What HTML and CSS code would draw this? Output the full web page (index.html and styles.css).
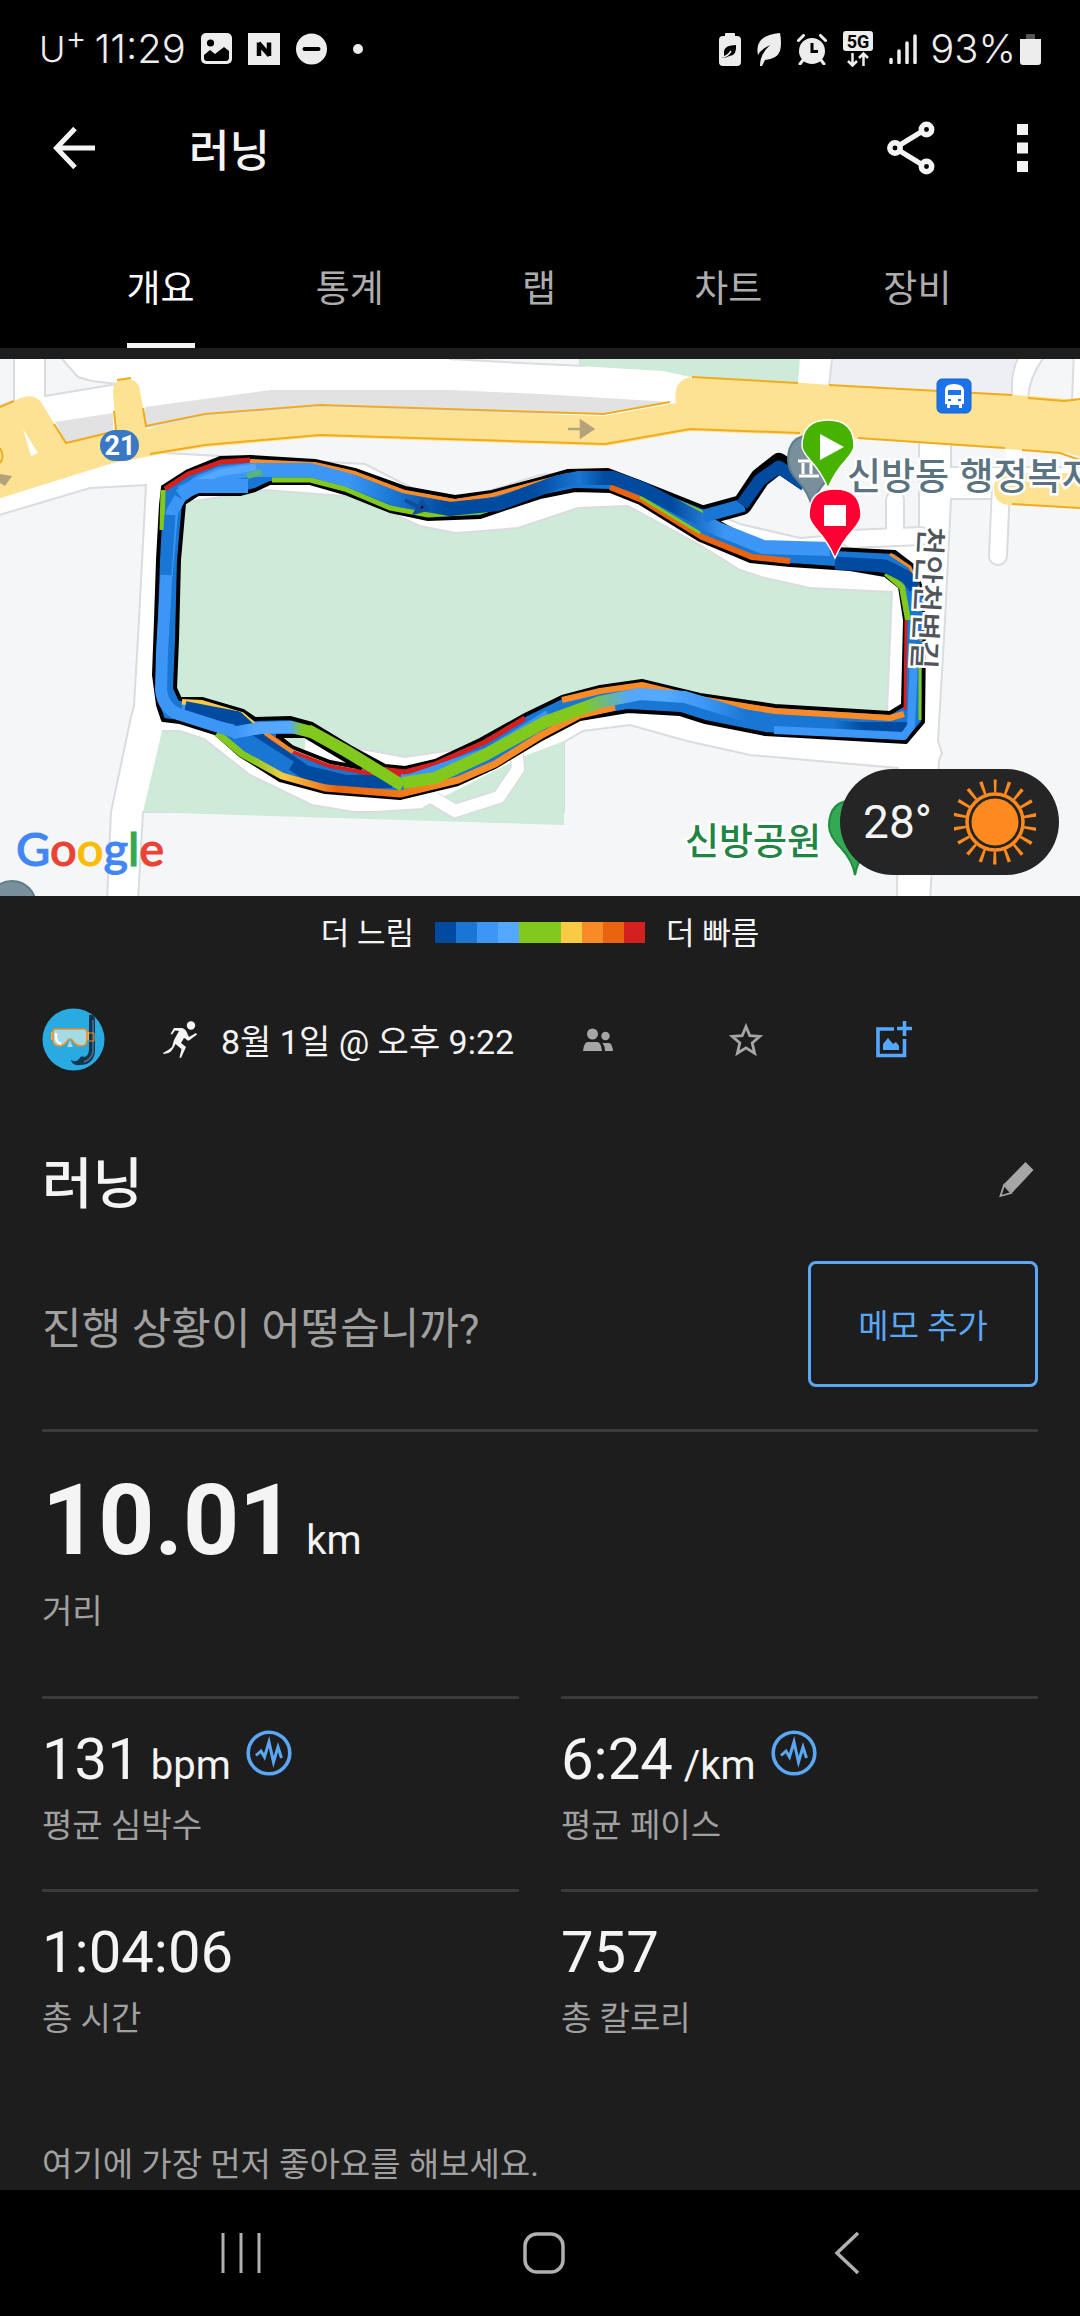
FILE: index.html
```html
<!DOCTYPE html>
<html lang="ko">
<head>
<meta charset="utf-8">
<meta name="viewport" content="width=device-width, initial-scale=1">
<title>러닝</title>
<link rel="stylesheet" href="styles.css">
</head>
<body>
<header class="top">
  <div class="status">
    <div class="status-side">
      <span class="carrier">U<sup>+</sup></span>
      <span class="clock">11:29</span>
      <div class="notices">
        <svg width="31" height="32" viewBox="0 0 31 32"><rect y="0" width="31" height="31" rx="5" fill="#ededed"/><circle cx="9.500" cy="10" r="3.600" fill="#000"/><path d="M3 22l6-5 5 4 9-7 5 4v6q0 4-3 4H6q-3 0-3-3z" fill="#000"/></svg>
        <svg width="32" height="32" viewBox="0 0 32 32"><rect width="32" height="32" fill="#ededed"/><path d="M11 23V9.500M21 23V9.500M10.500 10L21.500 22.500" stroke="#000" stroke-width="4.500" fill="none"/></svg>
        <svg width="31" height="32" viewBox="0 0 31 32"><circle cx="15.500" cy="16" r="15.500" fill="#ededed"/><path d="M8.500 16h14" stroke="#000" stroke-width="4" stroke-linecap="round"/></svg>
      </div>
      <span class="dot"></span>
    </div>
    <div class="status-side">
      <div class="signals">
        <svg width="22" height="33" viewBox="0 0 22 33"><path d="M6 3V1q0-1 1-1h8q1 0 1 1v2h2q4 0 4 4v22q0 4-4 4H4q-4 0-4-4V7q0-4 4-4z" fill="#ededed"/><path d="M5 23V18q1-6 12-6 1 10-6 11-2 0-4 1.500H3z" fill="#000"/><path d="M4 24q5-1 8-6" stroke="#ededed" stroke-width="1.500" fill="none"/></svg>
        <svg width="24" height="33" viewBox="0 0 24 33"><path d="M1 22Q-1 13 4 7 10 1 23 0q2 10 0 18-3 8-15 9l-3 6H3q0-12 10-21Q3 17 1 22z" fill="#ededed"/></svg>
        <svg width="30" height="31" viewBox="0 0 30 31"><circle cx="15" cy="17" r="13" fill="#ededed"/><path d="M1.500 6.500l5-5M28.500 6.500l-5-5M6 26l-3 4M24 26l3 4" stroke="#ededed" stroke-width="3" stroke-linecap="round"/><path d="M15 9v8.500h6" stroke="#000" stroke-width="3" fill="none"/></svg>
        <svg width="30" height="36" viewBox="0 0 30 36"><rect width="30" height="20" rx="3" fill="#ededed"/><text x="15" y="17" text-anchor="middle" class="five-g">5G</text><path d="M9.500 22v12M5 30l4.500 4.500L14 30M20.500 35V22.500M16 27l4.500-4.500L25 27" stroke="#ededed" stroke-width="2.500" fill="none"/></svg>
        <svg width="28" height="30" viewBox="0 0 28 30"><path d="M2 25.500v3M10 17v11.500M18 9v19.500M26 2v26.500" stroke="#ededed" stroke-width="3.500" stroke-linecap="round"/></svg>
      </div>
      <span class="percent">93%</span>
      <svg width="21" height="31" viewBox="0 0 21 31"><path d="M6 5V1q0-1 1-1h7q1 0 1 1v4z" fill="#555"/><path d="M0 5h21v23q0 3-3 3H3q-3 0-3-3z" fill="#ededed"/></svg>
    </div>
  </div>

  <div class="appbar">
    <button class="icon-button" aria-label="뒤로"><svg width="42" height="42" viewBox="0 0 42 42"><path d="M22 1.500L3.500 21 22 40.500M4 21h38" stroke="#f4f4f4" stroke-width="5" fill="none"/></svg></button>
    <h1 class="appbar-title">러닝</h1>
    <div class="appbar-actions">
      <button class="icon-button" aria-label="공유"><svg width="48" height="54" viewBox="0 0 48 54"><path d="M8 27L39 8M8 27l31 19" stroke="#f4f4f4" stroke-width="5"/><g fill="#000" stroke="#f4f4f4" stroke-width="5.500"><circle cx="8" cy="27" r="5.200"/><circle cx="39.500" cy="8.500" r="5.200"/><circle cx="39.500" cy="45.500" r="5.200"/></g></svg></button>
      <button class="icon-button" aria-label="더보기"><svg width="11" height="48" viewBox="0 0 11 48"><path d="M0 0h11v11H0zM0 18.500h11v11H0zM0 37h11v11H0z" fill="#f4f4f4"/></svg></button>
    </div>
  </div>

  <nav class="tabs">
    <a class="tab is-active" href="#overview"><span>개요</span></a>
    <a class="tab" href="#stats"><span>통계</span></a>
    <a class="tab" href="#laps"><span>랩</span></a>
    <a class="tab" href="#charts"><span>차트</span></a>
    <a class="tab" href="#gear"><span>장비</span></a>
  </nav>
</header>

<main class="overview" id="overview">
  <section class="map">
    <svg class="map-canvas" viewBox="0 359 1080 537" preserveAspectRatio="xMidYMid slice">
      <defs>
        <linearGradient id="fast" gradientUnits="userSpaceOnUse" x1="215" y1="0" x2="460" y2="0"><stop offset="0" stop-color="#81c91d"/><stop offset=".15" stop-color="#81c91d"/><stop offset=".28" stop-color="#f9cb45"/><stop offset=".5" stop-color="#ea6310"/><stop offset="1" stop-color="#f98b26"/></linearGradient>
        <linearGradient id="top" gradientUnits="userSpaceOnUse" x1="170" y1="0" x2="830" y2="0"><stop offset="0" stop-color="#3b96f5"/><stop offset=".27" stop-color="#3b96f5"/><stop offset=".34" stop-color="#1976d2"/><stop offset=".42" stop-color="#004a9f"/><stop offset=".55" stop-color="#004a9f"/><stop offset=".62" stop-color="#1976d2"/><stop offset=".66" stop-color="#004a9f"/><stop offset=".76" stop-color="#004a9f"/><stop offset=".84" stop-color="#3b96f5"/><stop offset="1" stop-color="#3b96f5"/></linearGradient>
        <linearGradient id="bottom" gradientUnits="userSpaceOnUse" x1="400" y1="0" x2="910" y2="0"><stop offset="0" stop-color="#81c91d"/><stop offset=".36" stop-color="#81c91d"/><stop offset=".45" stop-color="#54a8ff"/><stop offset=".52" stop-color="#54a8ff"/><stop offset=".6" stop-color="#3b96f5"/><stop offset=".68" stop-color="#1976d2"/><stop offset=".85" stop-color="#1976d2"/><stop offset=".91" stop-color="#004a9f"/><stop offset="1" stop-color="#004a9f"/></linearGradient>
        <linearGradient id="detour" gradientUnits="userSpaceOnUse" x1="235" y1="0" x2="310" y2="0"><stop offset="0" stop-color="#3b96f5"/><stop offset=".3" stop-color="#54a8ff"/><stop offset=".72" stop-color="#54a8ff"/><stop offset=".9" stop-color="#81c91d"/></linearGradient>
      </defs>

      <!-- road surface, with the blocks between the roads on top of it -->
      <rect y="359" width="1080" height="537" fill="#fff"/>
      <g fill="#f5f6f8" stroke="#dadce0" stroke-width="2">
        <path d="M-4 350h18v51l-18 6z"/>
        <path d="M45 350h14l3 9 16 18 14 4 25 3-72 12z"/>
        <path d="M450 350v9l90 5 45 2v-16z"/>
        <path d="M-4 516l94-28 56-3-7 135-5 86-3 11-20 95-4 88H-4z"/>
        <path d="M165 453l200 11 45 23 45 14 85-26 70-6 130 55 60 14 119-10V430H165z"/>
        <path d="M138 900l5-88h421v-70l19-11 47-6 57 16 63 14 148 13-1 132z"/>
        <path d="M930 900l9-140 3-7-4-12 7-121 6-121h140v400z"/>
        <path d="M951 440h140v27H951z"/>
        <path d="M1050 350h24l-2 52-44-4q2-26 22-48z"/>
        <path d="M833 350h189q-10 18-10 34v14l-183-12z" fill="#eeeff3"/>
      </g>
      <path d="M162 731h18l24 8 46 36 62 30 48 8 62-4 15-9 85-43 42-16v84l-421-13z" fill="#ceead8"/>
      <path d="M162 731h18l24 8 46 36 62 30 48 8 62-4 15-9" fill="none" stroke="#dadce0" stroke-width="2"/>
      <path d="M168 505L265 490l65 5 30 2 20 11 40 18 36 7 62-5 60-20 50-2 72 39 40 25 25 8 45 10 82 4-5 120-112-2-135-21-100 22-80 38-55 8-165-30-62-15z" fill="#ceead8" stroke="#dadce0" stroke-width="2"/>
      <path d="M579 359h221l-2 24-108-6-27-6-84-5z" fill="#ceead8"/>
      <path d="M434 799l21 12 44-14 19-28-2-25" fill="none" stroke="#dadce0" stroke-width="15"/>
      <path d="M430 796l25 15 44-14 19-28-2-25" fill="none" stroke="#fff" stroke-width="12"/>
      <g fill="none" stroke-linecap="round">
        <path d="M851 539l70-3M895 500v34M1001 490l-3 66" stroke="#dadce0" stroke-width="20"/>
        <path d="M851 539l70-3M895 500v34M1001 486l-3 70" stroke="#fff" stroke-width="16"/>
        <path d="M1014 440v30" stroke="#fff" stroke-width="16"/>
      </g>

      <!-- main road -->
      <path d="M55 422l58-9v20l-47 10zM145 407l125-17h180l90 4 130 8-66 12H320l-175 14z" fill="#e2e2e2"/>
      <path d="M0 406l14-5q22-12 30 6l22 36 50-11-3-40q0-13 13-13t14 12l7 38 58-13 115-9 220 7 64 2 72-13q-4-25 18-26l108 6 30 2 184 10 52 4 18-1v60l-20-5-60-4-205-14-110-4-85 15-65-2-220-7-115 10-50 8-43 8-58 18-57 18-38 15z" fill="#fde293"/>
      <path d="M23 429l15 24-7 3z" fill="#fff"/>
      <g fill="none" stroke="#f0ac1c" stroke-width="2">
        <path d="M0 407l14-6M54 424l12 19 50-12-2-20M117 380l14-2M143 408l3 18 59-12 115-9 220 7 64 2 66-12M692 377l106 6M829 385l183 10M1028 398l36 3 16-2M150 454l55-9 115-10 220 7 65 2 85-15 110 4M858 438l147 10M1022 450l38 3 20 7M0 448q5 9 0 15"/>
      </g>
      <path d="M1080 473h-74q-12 2-12 16t14 16l72 3z" fill="#fde293"/>
      <path d="M1012 504l68 4" stroke="#f0ac1c" stroke-width="2"/>
      <path d="M568 429h13v-8l12 8-12 8v-8" fill="#b4a27c" stroke="#b4a27c" stroke-width="2.500"/>
      <path d="M0 474l12 2-7 10-5-3z" fill="#b4a27c"/>

      <!-- recorded track -->
      <g fill="none" stroke-linejoin="round">
        <path d="M702 516l40-11 18-27 19-15 24 16" stroke="#000" stroke-width="20"/>
        <path d="M163 720l-5-15-4-30 2-55 2-60 3-55 2-18 25-16 32-13 30-1 65 4 40 9 50 18 50 9 37-5 48-13 28-8 40-1 32 12 65 26 15 15 30 17 25 8 60 1 60 3 17 13 10 25 2 50-1 82-17 20-141-8-60-12-25-8-52-3-48 8-40 21-45 27-37 17-58 14-75-6-45-12-40-25-25-22-35-11zM184 503l14-9h42l15-4 15-7h40l35 10 45 18 38 8 52-2 60-20 35-7 35 1 30 12 60 37 50 21 40 4 60 4 35 6 15 12 5 33-2 85-13 8-115-7-75-11-58-14-42 6-38 10-37 18-45 25-45 21-30 7-20-2-35-19-38-23-22-6-35 1-12-8-41-12h-22l-5-11 2-48 2-80z" fill="#1976d2" fill-rule="evenodd" stroke="#000" stroke-width="4"/>
        <path d="M165 489l23-15 33-12 29-2" stroke="#d4211f" stroke-width="5"/>
        <path d="M250 461l65 3 40 9 50 19 50 9 37-6 48-13 28-7" stroke="#f98b26" stroke-width="4"/>
        <path d="M163 490l-1 40M272 480h38l35 9 45 19 38 7 52-3 60-19" stroke="#81c91d" stroke-width="5"/>
        <path d="M640 486l65 28 15 14" stroke="#81c91d" stroke-width="5"/>
        <path d="M610 487l32 13 60 37 50 20 38 4" stroke="#ea6310" stroke-width="6"/>
        <path d="M640 497l60 36" stroke="#81c91d" stroke-width="3"/>
        <path d="M890 554l20 13 10 24 1 50" stroke="#f98b26" stroke-width="3"/>
        <path d="M886 573l16 14 6 33" stroke="#81c91d" stroke-width="6"/>
        <path d="M906 620l-1 90" stroke="#d4211f" stroke-width="3"/>
        <path d="M920 650v70" stroke="#81c91d" stroke-width="3"/>
        <path d="M904 714l-14 4-115-7-75-12-58-14-42 6-38 9" stroke="#f98b26" stroke-width="6"/>
        <path d="M182 702l20 1 40 12 15 13" stroke="#f9cb45" stroke-width="6"/>
        <path d="M262 732l15 9 24 13 30 9 74 9 30-8 50-22 40-24" stroke="#d4211f" stroke-width="5"/>
        <path d="M182 708l52 16 31 20 35 24 60 14 50-4 78-27 60-37" stroke="#3b96f5" stroke-width="8"/>
        <path d="M185 708l52 10 30 28 38 26 42 10 45-1" stroke="#004a9f" stroke-width="14"/>
        <path d="M235 733l55 35" stroke="#1976d2" stroke-width="15"/>
        <path d="M217 733l25 21 40 22 43 12 75 6 58-14 37-16 45-28 40-21 35-8" stroke="url(#fast)" stroke-width="7"/>
        <path d="M276 736l30-2 60 38-35-6-28-8z" fill="#ceead8"/>
        <path d="M306 737l53 33-22-4-33-13z" fill="#fff"/>
        <path d="M278 736l14 11 38 15 32 6M276 736h29l55 33" stroke="#000" stroke-width="4"/>
        <path d="M293 752l36 14 38 7 34 2" stroke="#d4211f" stroke-width="4"/>
        <path d="M265 733l28 19" stroke="#f98b26" stroke-width="4"/>
        <path d="M180 496l20-14 20-8 30-4h60l38 10 52 20 50 9 48-5 60-22 20-4h35l30 11 75 40 45 18 67 2" stroke="url(#top)" stroke-width="14"/>
        <path d="M198 482l22-9 36-6" stroke="#54a8ff" stroke-width="7"/>
        <path d="M180 493l18-7h50" stroke="#3b96f5" stroke-width="14"/>
        <path d="M247 476l15-4" stroke="#58b37c" stroke-width="6"/>
        <path d="M835 563l50 3 22 11 8 11" stroke="#004a9f" stroke-width="13"/>
        <path d="M918 590l-1 50" stroke="#1976d2" stroke-width="9"/>
        <path d="M908 728l-48 0-85-5-35-9-55-17-45-3-40 8-55 20-60 33-50 23-32 5" stroke="url(#bottom)" stroke-width="12"/>
        <path d="M914 660l-3 66-7 10-130-6" stroke="#3b96f5" stroke-width="8"/>
        <path d="M403 786l-55-34-40-22" stroke="#81c91d" stroke-width="12"/>
        <path d="M232 733l28-5 31-1 20 5" stroke="url(#detour)" stroke-width="12"/>
        <path d="M180 498l-8 14-6 70-4 70-1 38q2 18 17 24l60 19" stroke="#3b96f5" stroke-width="12"/>
        <path d="M170 515l-4 60" stroke="#1976d2" stroke-width="11"/>
        <path d="M704 516l40-11" stroke="#1976d2" stroke-width="13"/>
        <path d="M742 505l18-25 19-13 26 18" stroke="#004a9f" stroke-width="13"/>
      </g>
      <path d="M405 500l15 8M416 512l6-10 5 7z" stroke="#104d9d" stroke-width="4"/>

      <!-- places -->
      <rect x="937" y="379" width="34" height="34" rx="5" fill="#1a73e8" stroke="#1765cc"/>
      <path d="M945 390q0-6 9-6t10 6v14h-2v4h-3v-3h-9v3h-3v-4h-2zM948 390v5h13v-5zM948 399h3v2h-3zM958 399h3v2h-3z" fill="#fff" fill-rule="evenodd"/>
      <rect x="100" y="430" width="39" height="31" rx="15.500" fill="#3b78c4"/>
      <text x="120" y="455" text-anchor="middle" class="route-number">21</text>
      <path d="M812 507q-3-14-14-26-10-10-10-21 0-25 24-25t24 25q0 11-10 21-11 12-14 26z" fill="#78909c" stroke="#607d8b" stroke-width="2"/>
      <path d="M798 461h16M799 476h20M803 463v11M811 463v11" stroke="#fff" stroke-width="3"/>
      <text x="847" y="490" class="place place-office">신방동 행정복지</text>
      <text transform="translate(920 526) rotate(93)" class="place place-street">천안천변길</text>
      <text x="685" y="855" class="place place-park">신방공원</text>
      <path d="M855 875q-2-14-14-27-12-12-12-22 0-26 26-26t26 26q0 10-12 22-12 13-14 27z" fill="#34a853" stroke="#1e8e3e" stroke-width="2"/>
      <circle cx="12" cy="905" r="24" fill="#78909c" stroke="#607d8b" stroke-width="2"/>

      <!-- finish and start -->
      <path d="M835 558q-7-16-18-28-8-9-8-15 0-26 26-26t26 26q0 6-8 15-11 12-18 28z" fill="#ff0033" stroke="#fff" stroke-width="1.500"/>
      <rect x="824" y="505" width="22" height="21" fill="#fff"/>
      <path d="M828 488q-7-16-18-28-8-9-8-14 0-26 26-26t26 26q0 5-8 14-11 12-18 28z" fill="#48b200" stroke="#fff" stroke-width="1.500"/>
      <path d="M820 434l24 13-24 13z" fill="#fff"/>

      <text x="16" y="866" class="brand"><tspan class="b-blue">G</tspan><tspan class="b-red">o</tspan><tspan class="b-yellow">o</tspan><tspan class="b-blue">g</tspan><tspan class="b-green">l</tspan><tspan class="b-red">e</tspan></text>
    </svg>
    <div class="weather">
      <span>28°</span>
      <svg width="82" height="86" viewBox="-41 -43 82 86"><circle r="23.500" fill="#ff8a1f"/><circle r="28" fill="none" stroke="#ff8a1f" stroke-width="3.500"/><circle r="36" fill="none" stroke="#ff8a1f" stroke-width="13" stroke-dasharray="3 9.566" stroke-dashoffset="1.500" transform="rotate(-90)"/></svg>
    </div>
  </section>

  <div class="legend">
    <span>더 느림</span>
    <div class="scale"><i class="c1"></i><i class="c2"></i><i class="c3"></i><i class="c4"></i><i class="c5"></i><i class="c5"></i><i class="c6"></i><i class="c7"></i><i class="c8"></i><i class="c9"></i></div>
    <span>더 빠름</span>
  </div>

  <section class="activity">
    <div class="meta">
      <svg class="avatar" width="63" height="63" viewBox="0 0 63 63"><circle cx="31.500" cy="31.500" r="31" fill="#29abe2"/><path d="M47 7q6-1 6 5v32q-2 13-15 13-8 1-9-5 5 3 8-1 2-4 5-2 5-1 5-8z" fill="#12344d"/><path d="M51 12v32q-2 8-9 10" stroke="#52728a" fill="none" stroke-width="1.500"/><path d="M47 25h5v8h-5" fill="none" stroke="#f7941e"/><rect x="9" y="24" width="38" height="8" fill="#fbb03b"/><path d="M13 21h29q3 0 3 4v7q0 6-6 6-5 0-9-6-2-2-4 0-4 6-8 6-7 0-7-6v-7q0-4 2-4z" fill="#a5dbe6" stroke="#f08a24" stroke-width="1.500"/><path d="M14 25q-1 9 5 11" stroke="#fff" stroke-width="2.500" fill="none"/><path d="M25 39l3-8 3 8" fill="#a5dbe6" stroke="#52b8da"/></svg>
      <svg width="35" height="37" viewBox="0 0 35 37"><circle cx="28" cy="4.500" r="4.200" fill="#f4f4f4"/><path d="M11 7l8 0q4 1 5.500 6l1.500 3 7-4 1 1.500-8 6q-2 .5-3-1.500l-2-1-3 5 5 4-5 11-1.500-.5 2-8.500-6-5q-3 7-7 9L.500 33 0 32q6-3 9-6l2-7 5-9-4-.5-3 4-1.500-.5z" fill="#f4f4f4"/></svg>
      <time class="date">8월 1일 @ 오후 9:22</time>
      <div class="meta-actions">
        <button class="icon-button" aria-label="공개 범위"><svg width="30" height="24" viewBox="0 0 30 24"><g fill="#a6a6a6"><circle cx="9.500" cy="6" r="5.500"/><circle cx="22.500" cy="8" r="4.200"/><path d="M0 23q1-9 5-9h9q4 0 5 9zM19.500 15H26q3 0 4 8h-8q0-5-2.500-8z"/></g></svg></button>
        <button class="icon-button" aria-label="즐겨찾기"><svg width="34" height="34" viewBox="0 0 34 34"><path d="M17 3.500l3.800 9.200 10 .7-7.600 6.500 2.400 10.300L17 24.800l-8.600 5.400 2.400-10.300-7.600-6.500 10-.7z" fill="none" stroke="#a6a6a6" stroke-width="2.800"/></svg></button>
        <button class="icon-button" aria-label="사진 추가"><svg width="36" height="37" viewBox="0 0 36 37"><path d="M18 8H2v26.500h26.500V18" fill="none" stroke="#54a8ff" stroke-width="3.600"/><path d="M28.500 0v15M21 7.500h15" stroke="#54a8ff" stroke-width="3.600"/><path d="M7 29v-6l5-6 5 6 3-2 3 4v4z" fill="#54a8ff"/></svg></button>
      </div>
    </div>

    <div class="heading">
      <h2>러닝</h2>
      <button class="icon-button" aria-label="이름 편집"><svg width="35" height="36" viewBox="0 0 35 36"><path d="M26.500 0l8 8L13 31 5 22z" fill="#a6a6a6"/><path d="M5 23L1.500 34 12 31z" fill="none" stroke="#a6a6a6" stroke-width="1.800"/></svg></button>
    </div>

    <div class="note">
      <p>진행 상황이 어떻습니까?</p>
      <button class="note-button">메모 추가</button>
    </div>

    <dl class="stats">
      <div class="stat stat-wide">
        <dd class="value"><b>10.01</b><span class="unit">km</span></dd>
        <dt>거리</dt>
      </div>
      <div class="stat">
        <dd class="value">131<span class="unit">bpm</span><svg class="zone" width="46" height="46" viewBox="0 0 46 46"><circle cx="23" cy="23" r="20.800" fill="none" stroke="#5aa7f5" stroke-width="3.600"/><path d="M10 25.500l5-4.500 3.500 6L23 12l4.500 20 4.500-15 3.500 11" fill="none" stroke="#5aa7f5" stroke-width="3"/></svg></dd>
        <dt>평균 심박수</dt>
      </div>
      <div class="stat">
        <dd class="value">6:24<span class="unit">/km</span><svg class="zone" width="46" height="46" viewBox="0 0 46 46"><circle cx="23" cy="23" r="20.800" fill="none" stroke="#5aa7f5" stroke-width="3.600"/><path d="M10 25.500l5-4.500 3.500 6L23 12l4.500 20 4.500-15 3.500 11" fill="none" stroke="#5aa7f5" stroke-width="3"/></svg></dd>
        <dt>평균 페이스</dt>
      </div>
      <div class="stat">
        <dd class="value">1:04:06</dd>
        <dt>총 시간</dt>
      </div>
      <div class="stat">
        <dd class="value">757</dd>
        <dt>총 칼로리</dt>
      </div>
    </dl>

    <p class="likes">여기에 가장 먼저 좋아요를 해보세요.</p>
  </section>
</main>

<footer class="system-nav">
  <button class="icon-button" aria-label="최근 앱"><svg width="40" height="42" viewBox="0 0 40 42"><path d="M2 1v40M20 1v40M38 1v40" stroke="#b0b0b0" stroke-width="3"/></svg></button>
  <button class="icon-button" aria-label="홈"><svg width="42" height="42" viewBox="0 0 42 42"><rect x="2" y="2" width="38" height="38" rx="12" fill="none" stroke="#b0b0b0" stroke-width="3.500"/></svg></button>
  <button class="icon-button" aria-label="뒤로"><svg width="26" height="42" viewBox="0 0 26 42"><path d="M24 1L3 21l21 20" fill="none" stroke="#b0b0b0" stroke-width="3.500"/></svg></button>
</footer>
</body>
</html>
```

FILE: styles.css
```css
* { box-sizing: border-box; }

body {
  margin: 0;
  min-height: 100vh;
  display: flex;
  flex-direction: column;
  background: #1d1d1d;
  color: #f4f4f4;
  font-family: Roboto, "Noto Sans CJK KR", sans-serif;
  font-size: 33px;
  line-height: 48px;
}

svg { display: block; flex: none; }
h1, h2, p, dl, dd { margin: 0; }

.icon-button {
  display: flex;
  align-items: center;
  justify-content: center;
  padding: 0;
  border: 0;
  background: none;
}

/* Status bar, app bar, tabs */
.top { background: #000; }

.status {
  display: flex;
  justify-content: space-between;
  height: 98px;
  padding: 0 39px;
  color: #ededed;
  font-family: Inter, Roboto, sans-serif;
  font-size: 40px;
  font-weight: 300;
}
.status-side { display: flex; align-items: center; }
.carrier { font-size: 36px; }
.carrier sup { font-size: 32px; line-height: 0; }
.clock { margin-left: 8px; }
.notices { display: flex; gap: 16px; margin-left: 15px; }
.dot { width: 10px; height: 10px; margin-left: 26px; border-radius: 50%; background: #ededed; }
.signals { display: flex; align-items: center; gap: 16px; }
.percent { margin: 0 4px 0 13px; }
.five-g { font: 700 18px Roboto, sans-serif; fill: #000; }

.appbar {
  display: flex;
  align-items: center;
  gap: 94px;
  height: 100px;
  padding: 0 52px 0 53px;
}
.appbar-title { padding-top: 8px; font-size: 44px; font-weight: 500; line-height: 60px; }
.appbar-actions { display: flex; align-items: center; gap: 82px; margin-left: auto; }

.tabs {
  display: grid;
  grid-template-columns: repeat(5, 1fr);
  align-items: end;
  height: 150px;
  padding: 0 68px 0 66px;
}
.tab {
  display: flex;
  justify-content: center;
  color: #adadad;
  font-size: 37px;
  text-decoration: none;
}
.tab span { padding-bottom: 29px; border-bottom: 5px solid transparent; }
.is-active { color: #fff; }
.is-active span { border-bottom-color: #f4f4f4; }

/* Map */
.overview { padding-top: 11px; }
.map { position: relative; }
.map-canvas { width: 100%; height: 537px; }
.place {
  font-family: "Noto Sans CJK KR", sans-serif;
  font-weight: 500;
  stroke: #fff;
  stroke-width: 5px;
  paint-order: stroke;
}
.place-office { font-size: 37px; fill: #5a7380; }
.place-street { font-size: 31px; fill: #50555b; }
.place-park { font-size: 37px; fill: #1e8544; }
.route-number { font: 700 27px Roboto, sans-serif; fill: #fff; }
.brand { font: 500 47px Lato, sans-serif; stroke-width: 1px; }
.b-blue { fill: #4285f4; stroke: #4285f4; }
.b-red { fill: #ea4335; stroke: #ea4335; }
.b-yellow { fill: #fbbc05; stroke: #fbbc05; }
.b-green { fill: #34a853; stroke: #34a853; }

.weather {
  position: absolute;
  right: 21px;
  bottom: 21px;
  display: flex;
  align-items: center;
  gap: 22px;
  height: 106px;
  padding: 0 23px;
  border-radius: 53px;
  background: #252525;
  font-size: 46px;
}

.legend {
  display: flex;
  align-items: center;
  justify-content: center;
  gap: 21px;
  height: 73px;
  font-size: 31px;
}
.legend span { padding-top: 2px; }
.scale { display: flex; }
.scale i { width: 21px; height: 21px; }
.c1 { background: #004a9f; }
.c2 { background: #1976d2; }
.c3 { background: #3b96f5; }
.c4 { background: #54a8ff; }
.c5 { background: #81c91d; }
.c6 { background: #f9cb45; }
.c7 { background: #f98b26; }
.c8 { background: #ea6310; }
.c9 { background: #d4211f; }

/* Activity */
.activity { padding: 0 42px; }

.meta { display: flex; align-items: center; height: 141px; }
.avatar { margin-right: 58px; }
.date { margin: 0 10px 0 23px; padding-top: 4px; font-size: 34px; }
.meta-actions { display: grid; grid-template-columns: repeat(3, 148px); }

.heading {
  display: flex;
  align-items: center;
  justify-content: space-between;
  height: 140px;
  padding-right: 4px;
}
.heading h2 { padding-top: 8px; font-size: 55px; font-weight: 500; line-height: 80px; }

.note {
  display: flex;
  align-items: center;
  justify-content: space-between;
  padding: 11px 0 42px;
}
.note p { padding-top: 10px; color: #a0a0a0; font-size: 43px; line-height: 64px; }
.note-button {
  height: 126px;
  padding: 6px 47px 0;
  border: 3px solid #5aa7f5;
  border-radius: 8px;
  background: none;
  color: #5aa7f5;
  font: inherit;
}

.stats { display: grid; grid-template-columns: 1fr 1fr; column-gap: 42px; }
.stat {
  display: flex;
  flex-direction: column;
  gap: 9px;
  padding: 26px 0 39px;
  border-top: 3px solid #3a3a3a;
}
.stat dt { color: #a0a0a0; }
.stat-wide { grid-column: 1 / -1; padding: 31px 0 60px; }
.value {
  display: flex;
  align-items: baseline;
  gap: 11px;
  font-size: 58px;
  line-height: 68px;
}
.value b { font-size: 98px; line-height: 116px; }
.unit { font-size: 40px; line-height: 48px; }
.zone { align-self: flex-start; margin: 5px 0 0 4px; }

.likes { padding-top: 59px; color: #a0a0a0; }

.system-nav {
  display: grid;
  grid-template-columns: repeat(3, 1fr);
  height: 126px;
  margin-top: auto;
  padding: 0 82px 0 90px;
  background: #000;
}
```
